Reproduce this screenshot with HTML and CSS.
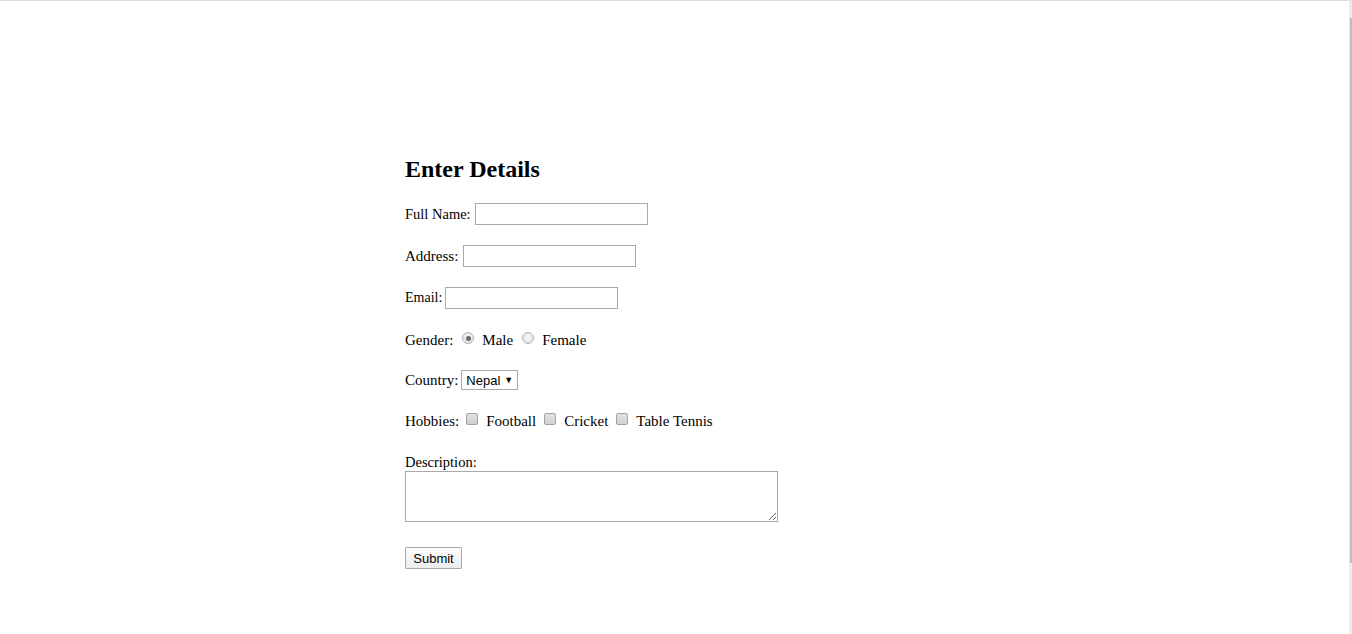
FILE: index.html
```html
<!DOCTYPE html>
<html>
<head>
<meta charset="utf-8">
<title>Enter Details</title>
<link rel="stylesheet" href="styles.css">
</head>
<body>
<div class="topline"></div>
<div class="scrollbar"><div class="thumb"></div></div>
<form class="form">
  <h2 class="title">Enter Details</h2>
  <div class="row"><label class="lbl-name">Full Name:</label><input class="text" type="text"></div>
  <div class="row"><label class="lbl-addr">Address:</label><input class="text" type="text"></div>
  <div class="row"><label class="lbl-mail">Email:</label><input class="text" type="text"></div>
  <div class="row">
    <label>Gender:</label>
    <input class="radio" type="radio" name="g" checked><span>Male</span>
    <input class="radio" type="radio" name="g"><span>Female</span>
  </div>
  <div class="row short"><label>Country:</label><div class="select"><span>Nepal</span><span class="arrow">▼</span></div></div>
  <div class="row">
    <label>Hobbies:</label>
    <input class="check" type="checkbox"><span>Football</span>
    <input class="check" type="checkbox"><span>Cricket</span>
    <input class="check" type="checkbox"><span>Table Tennis</span>
  </div>
  <div class="desc">
    <label>Description:</label>
    <textarea class="area"></textarea>
  </div>
  <div class="submitrow"><button type="button" class="btn">Submit</button></div>
</form>
</body>
</html>
```
FILE: styles.css
```css
html, body {
  margin: 0;
  padding: 0;
  background: #fff;
}
body {
  font-family: "Liberation Serif", "Times New Roman", serif;
  font-size: 15px;
  color: #000;
  width: 1352px;
  height: 634px;
  overflow: hidden;
}
.topline {
  height: 1px;
  background: #dcdcdc;
}
.scrollbar {
  position: fixed;
  top: 0;
  right: 0;
  width: 3px;
  height: 634px;
  background: #ececec;
}
.thumb {
  margin-top: 18px;
  margin-left: 1px;
  width: 2px;
  height: 545px;
  background: #bdbdbd;
}
.form {
  margin: 0 0 0 405px;
  padding-top: 154px;
  display: flex;
  flex-direction: column;
  gap: 20px;
}
.title {
  margin: 0;
  font-size: 24px;
  line-height: 28px;
  font-weight: bold;
}
.row {
  height: 22px;
  display: flex;
  align-items: center;
}
.row.short {
  height: 20px;
  margin-top: -1px;
}
.row label {
  margin-right: 4px;
}
.row .lbl-name {
  font-size: 14.5px;
  margin-right: 4px;
}
.row .lbl-addr {
  margin-right: 5px;
}
.row .lbl-mail {
  font-size: 14px;
  margin-right: 3px;
}
.text {
  box-sizing: border-box;
  width: 173px;
  height: 22px;
  margin: 0;
  border: 1px solid #a9a9a9;
  padding: 1px 2px;
  font-family: "Liberation Sans", Arial, sans-serif;
  font-size: 13px;
}
.radio {
  appearance: none;
  -webkit-appearance: none;
  box-sizing: border-box;
  width: 12px;
  height: 12px;
  margin: -4px 8px 0 5px;
  border: 1px solid #b4b4b4;
  border-radius: 50%;
  background: radial-gradient(circle at 50% 40%, #f6f6f6, #dcdcdc);
  position: relative;
}
.radio:checked::after {
  content: "";
  position: absolute;
  left: 2.5px;
  top: 2.5px;
  width: 5px;
  height: 5px;
  border-radius: 50%;
  background: #6b6b6b;
}
.radio + span {
  margin-right: 4px;
}
.select {
  box-sizing: border-box;
  height: 20px;
  width: 57px;
  border: 1px solid #a9a9a9;
  display: flex;
  align-items: center;
  padding: 0 4px 0 4px;
  gap: 4px;
  font-family: "Liberation Sans", Arial, sans-serif;
  font-size: 13px;
  margin-left: -1px;
}
.arrow {
  font-size: 9px;
}
.check {
  appearance: none;
  -webkit-appearance: none;
  box-sizing: border-box;
  width: 12px;
  height: 12px;
  margin: -4px 8px 0 8px;
  border: 1px solid #a3a3a3;
  border-radius: 2px;
  background: linear-gradient(#e4e4e4, #d0d0d0);
}
.row label + .check {
  margin-left: 3px;
}
.desc {
  display: flex;
  flex-direction: column;
  line-height: 17px;
  margin-top: 2px;
  font-size: 14.5px;
}
.area {
  box-sizing: border-box;
  width: 373px;
  height: 51px;
  margin: 0;
  border: 1px solid #a9a9a9;
  resize: both;
}
.submitrow {
  margin-top: 5px;
  display: flex;
}
.btn {
  box-sizing: border-box;
  width: 57px;
  height: 22px;
  margin: 0;
  padding: 0;
  border: 1px solid #a9a9a9;
  border-radius: 1px;
  background: linear-gradient(#fdfdfd, #ececec);
  font-family: "Liberation Sans", Arial, sans-serif;
  font-size: 13px;
  color: #000;
}
```
